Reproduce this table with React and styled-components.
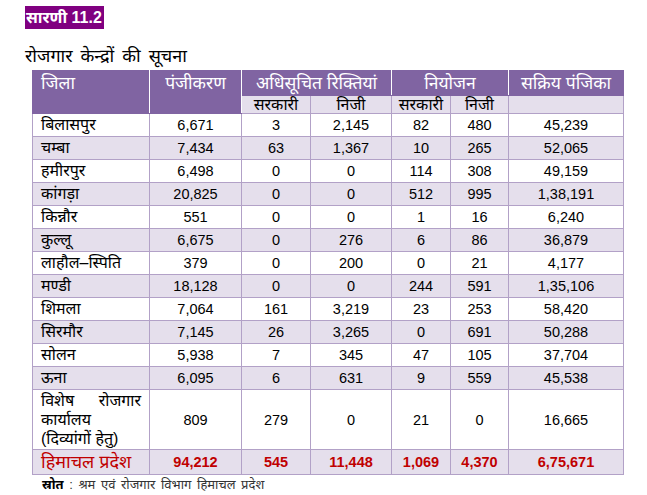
import React from "react";
import styled, { createGlobalStyle } from "styled-components";

const Global = createGlobalStyle`
  html, body { margin: 0; padding: 0; background: #fff; }
  body { font-family: "Liberation Sans", Arial, "Noto Sans Devanagari", "Noto Sans", sans-serif; }
`;

const Page = styled.div`
  width: 647px;
  height: 495px;
  box-sizing: border-box;
  padding: 6px 0 0 25px;
  display: flex;
  flex-direction: column;
`;

const Badge = styled.div`
  align-self: flex-start;
  background: #800080;
  color: #fff;
  height: 23px;
  line-height: 23px;
  padding: 0 2px 0 1px;
  font-size: 16px;
  font-weight: bold;
  white-space: nowrap;
`;

const Caption = styled.div`
  margin-top: 16px;
  font-size: 18px;
  line-height: 22px;
  color: #000;
  word-spacing: 3px;
`;

const Table = styled.table`
  margin: 3px 0 0 7px;
  border-collapse: collapse;
  table-layout: fixed;
  width: 591px;
  font-size: 14.5px;
  color: #000;
`;

const Head = styled.th`
  background: #8064a2;
  color: #fff;
  font-weight: normal;
  font-size: 17.5px;
  height: 24px;
  padding: 0 8px;
  text-align: ${(p) => p.$align || "center"};
  vertical-align: top;
  line-height: 24px;
  border: 1px solid #8064a2;
  border-left: 1px solid #fff;
  border-right: 1px solid #fff;
  &:first-child { border-left-color: #8064a2; }
  &:last-child { border-right-color: #8064a2; }
`;

const Sub = styled.th`
  background: #e5dfec;
  font-weight: normal;
  font-size: 16px;
  height: 17px;
  line-height: 17px;
  padding: 0;
  border: 1px solid #b2a1c7;
  border-top-color: #8064a2;
`;

const Row = styled.tr`
  background: ${(p) => (p.$shade ? "#e5dfec" : "#fff")};
`;

const Cell = styled.td`
  border: 1px solid #b2a1c7;
  height: ${(p) => (p.$total ? "24px" : "22px")};
  padding: 0 8px;
  text-align: ${(p) => p.$align || "center"};
  line-height: 22px;
  font-size: ${(p) => (p.$name ? (p.$total ? "18px" : "16px") : "14.5px")};
  color: ${(p) => (p.$total ? "#c00000" : "#000")};
  font-weight: ${(p) => (p.$total && !p.$name ? "bold" : "normal")};
`;

const Stack = styled.div`
  display: flex;
  flex-direction: column;
  line-height: 19px;
  padding: 1px 0;
`;

const Spread = styled.div`
  display: flex;
  justify-content: space-between;
`;

const Source = styled.div`
  margin: 2px 0 0 17px;
  font-size: 13px;
  color: #333;
  word-spacing: 2px;
  b { color: #000; }
`;

const rows = [
  ["बिलासपुर", "6,671", "3", "2,145", "82", "480", "45,239"],
  ["चम्बा", "7,434", "63", "1,367", "10", "265", "52,065"],
  ["हमीरपुर", "6,498", "0", "0", "114", "308", "49,159"],
  ["कांगड़ा", "20,825", "0", "0", "512", "995", "1,38,191"],
  ["किन्नौर", "551", "0", "0", "1", "16", "6,240"],
  ["कुल्लू", "6,675", "0", "276", "6", "86", "36,879"],
  ["लाहौल–स्पिति", "379", "0", "200", "0", "21", "4,177"],
  ["मण्डी", "18,128", "0", "0", "244", "591", "1,35,106"],
  ["शिमला", "7,064", "161", "3,219", "23", "253", "58,420"],
  ["सिरमौर", "7,145", "26", "3,265", "0", "691", "50,288"],
  ["सोलन", "5,938", "7", "345", "47", "105", "37,704"],
  ["ऊना", "6,095", "6", "631", "9", "559", "45,538"],
];

const widths = [117, 92, 69, 81, 59, 58, 115];

export default function App() {
  return (
    <Page>
      <Global />
      <Badge>सारणी 11.2</Badge>
      <Caption>रोजगार केन्द्रों की सूचना</Caption>
      <Table>
        <colgroup>
          {widths.map((w, i) => (
            <col key={i} style={{ width: w }} />
          ))}
        </colgroup>
        <thead>
          <tr>
            <Head rowSpan={2} $align="left">जिला</Head>
            <Head rowSpan={2}>पंजीकरण</Head>
            <Head colSpan={2}>अधिसूचित रिक्तियां</Head>
            <Head colSpan={2}>नियोजन</Head>
            <Head>सक्रिय पंजिका</Head>
          </tr>
          <tr>
            <Sub>सरकारी</Sub>
            <Sub>निजी</Sub>
            <Sub>सरकारी</Sub>
            <Sub>निजी</Sub>
            <Sub />
          </tr>
        </thead>
        <tbody>
          {rows.map((r, i) => (
            <Row key={r[0]} $shade={i % 2 === 1}>
              {r.map((c, j) => (
                <Cell key={j} $align={j === 0 ? "left" : "center"} $name={j === 0}>
                  {c}
                </Cell>
              ))}
            </Row>
          ))}
          <Row>
            <Cell $align="left" $name>
              <Stack>
                <Spread>
                  <span>विशेष</span>
                  <span>रोजगार</span>
                </Spread>
                <span>कार्यालय</span>
                <span>(दिव्यांगों हेतु)</span>
              </Stack>
            </Cell>
            <Cell>809</Cell>
            <Cell>279</Cell>
            <Cell>0</Cell>
            <Cell>21</Cell>
            <Cell>0</Cell>
            <Cell>16,665</Cell>
          </Row>
          <Row $shade>
            <Cell $align="left" $name $total>हिमाचल प्रदेश</Cell>
            <Cell $total>94,212</Cell>
            <Cell $total>545</Cell>
            <Cell $total>11,448</Cell>
            <Cell $total>1,069</Cell>
            <Cell $total>4,370</Cell>
            <Cell $total>6,75,671</Cell>
          </Row>
        </tbody>
      </Table>
      <Source>
        <b>स्रोत</b> : श्रम एवं रोजगार विभाग हिमाचल प्रदेश
      </Source>
    </Page>
  );
}
